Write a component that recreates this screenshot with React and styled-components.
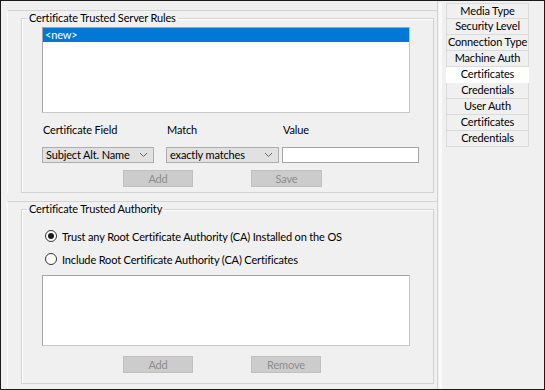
import React from "react";
import styled, { createGlobalStyle } from "styled-components";

const Global = createGlobalStyle`
  html, body { margin: 0; padding: 0; background: #f0f0f0; }
  * { box-sizing: border-box; }
`;

const FONT = `Lato, "Liberation Sans", Arial, sans-serif`;

const Window = styled.div`
  width: 545px;
  height: 390px;
  border: 1px solid #1a1a1a;
  background: #f0f0f0;
  display: flex;
  font-family: ${FONT};
  font-size: 11px;
  letter-spacing: -0.15px;
  color: #000;
  overflow: hidden;
`;

const Main = styled.div`
  width: 436px;
  display: flex;
  flex-direction: column;
  padding: 9px 0 0 6px;
`;

const Section = styled.div`
  border-top: 1px solid #d4d4d4;
  border-left: 1px solid #fbfbfb;
  padding: 0 3px 0 13px;
  margin-top: ${(p) => p.$mt}px;
  flex: ${(p) => (p.$grow ? 1 : "none")};
  display: flex;
  flex-direction: column;
`;

const Group = styled.fieldset`
  margin: 0;
  padding: 0;
  min-width: 0;
  border: 1px solid #d3d3d3;
  box-shadow: inset 1px 1px 0 #fff;
  height: ${(p) => p.$h}px;
`;

const Legend = styled.legend`
  margin-left: 5px;
  padding: 0 2px;
  line-height: 14px;
`;

const GroupBody = styled.div`
  display: flex;
  flex-direction: column;
  padding-left: 20px;
`;

const ListBox = styled.div`
  width: 368px;
  height: ${(p) => p.$h}px;
  margin-top: ${(p) => p.$mt}px;
  background: #fff;
  border: 1px solid #a5a5a5;
  border-right-color: #c8c8c8;
  border-bottom-color: #c8c8c8;
`;

const ListItem = styled.div`
  height: 14px;
  line-height: 14px;
  padding-left: 2px;
  background: ${(p) => (p.$selected ? "#0078d7" : "transparent")};
  color: ${(p) => (p.$selected ? "#fff" : "#000")};
`;

const FieldGrid = styled.div`
  display: grid;
  grid-template-columns: 124px 116px 137px;
  grid-template-rows: 14px 16px;
  row-gap: 10px;
  margin-top: 10px;
`;

const Label = styled.div`
  padding-left: 1px;
  line-height: 14px;
`;

const Select = styled.div`
  width: ${(p) => p.$w}px;
  height: 16px;
  background: #e1e1e1;
  border: 1px solid #adadad;
  display: flex;
  align-items: center;
  justify-content: space-between;
  padding: 0 5px 0 3px;
  line-height: 14px;
`;

const Input = styled.div`
  width: 137px;
  height: 16px;
  background: #fff;
  border: 1px solid #a5a5a5;
`;

const ButtonRow = styled.div`
  display: flex;
  gap: ${(p) => p.$gap}px;
  padding-left: 81px;
  margin-top: ${(p) => p.$mt}px;
`;

const Button = styled.div`
  width: ${(p) => p.$w}px;
  height: 17px;
  background: #cccccc;
  border: 1px solid #c0c0c0;
  color: #8d8d8d;
  display: flex;
  align-items: center;
  justify-content: center;
  line-height: 14px;
`;

const Radios = styled.div`
  display: flex;
  flex-direction: column;
  gap: 9px;
  margin-top: 13px;
`;

const RadioRow = styled.label`
  display: flex;
  align-items: center;
  gap: 5px;
  padding-left: 3px;
  height: 14px;
`;

const RadioCircle = styled.span`
  width: 12px;
  height: 12px;
  border-radius: 50%;
  border: 1px solid #333;
  background: #fff;
  display: flex;
  align-items: center;
  justify-content: center;
  &::after {
    content: "";
    width: 6px;
    height: 6px;
    border-radius: 50%;
    background: ${(p) => (p.$checked ? "#1a1a1a" : "transparent")};
  }
`;

const Side = styled.div`
  flex: 1;
  border-left: 1px solid #d4d4d4;
  display: flex;
  padding: 2px 0 0 1px;
`;

const SideInner = styled.div`
  flex: 1;
  border-left: 3px solid #fafafa;
  padding-left: 4px;
`;

const TabList = styled.div`
  width: 83px;
  display: flex;
  flex-direction: column;
`;

const Tab = styled.div`
  height: 16px;
  line-height: 14px;
  text-align: center;
  border: 1px solid #dadada;
  border-top-width: ${(p) => (p.$first ? 1 : 0)}px;
  background: ${(p) => (p.$active ? "#fff" : "#f0f0f0")};
  border-color: ${(p) => (p.$active ? "#fff" : "#dadada")};
  white-space: nowrap;
`;

const Chevron = () => (
  <svg width="9" height="6" viewBox="0 0 9 6">
    <path d="M1 1 L4.5 4.5 L8 1" fill="none" stroke="#666" strokeWidth="1" />
  </svg>
);

const tabs = [
  "Media Type",
  "Security Level",
  "Connection Type",
  "Machine Auth",
  "Certificates",
  "Credentials",
  "User Auth",
  "Certificates",
  "Credentials",
];

export default function App() {
  return (
    <>
      <Global />
      <Window>
        <Main>
          <Section $mt={0}>
            <Group $h={182}>
              <Legend>Certificate Trusted Server Rules</Legend>
              <GroupBody>
                <ListBox $h={86} $mt={2}>
                  <ListItem $selected>&lt;new&gt;</ListItem>
                </ListBox>
                <FieldGrid>
                  <Label>Certificate Field</Label>
                  <Label>Match</Label>
                  <Label>Value</Label>
                  <Select $w={112}>
                    <span>Subject Alt. Name</span>
                    <Chevron />
                  </Select>
                  <Select $w={113}>
                    <span>exactly matches</span>
                    <Chevron />
                  </Select>
                  <Input />
                </FieldGrid>
                <ButtonRow $gap={58} $mt={7}>
                  <Button $w={70}>Add</Button>
                  <Button $w={71}>Save</Button>
                </ButtonRow>
              </GroupBody>
            </Group>
          </Section>
          <Section $mt={8} $grow>
            <Group $h={182}>
              <Legend>Certificate Trusted Authority</Legend>
              <GroupBody>
                <Radios>
                  <RadioRow>
                    <RadioCircle $checked />
                    Trust any Root Certificate Authority (CA) Installed on the OS
                  </RadioRow>
                  <RadioRow>
                    <RadioCircle />
                    Include Root Certificate Authority (CA) Certificates
                  </RadioRow>
                </Radios>
                <ListBox $h={71} $mt={9} />
                <ButtonRow $gap={58} $mt={10}>
                  <Button $w={70}>Add</Button>
                  <Button $w={70}>Remove</Button>
                </ButtonRow>
              </GroupBody>
            </Group>
          </Section>
        </Main>
        <Side>
          <SideInner>
            <TabList>
              {tabs.map((t, i) => (
                <Tab key={i} $first={i === 0} $active={i === 4}>
                  {t}
                </Tab>
              ))}
            </TabList>
          </SideInner>
        </Side>
      </Window>
    </>
  );
}
